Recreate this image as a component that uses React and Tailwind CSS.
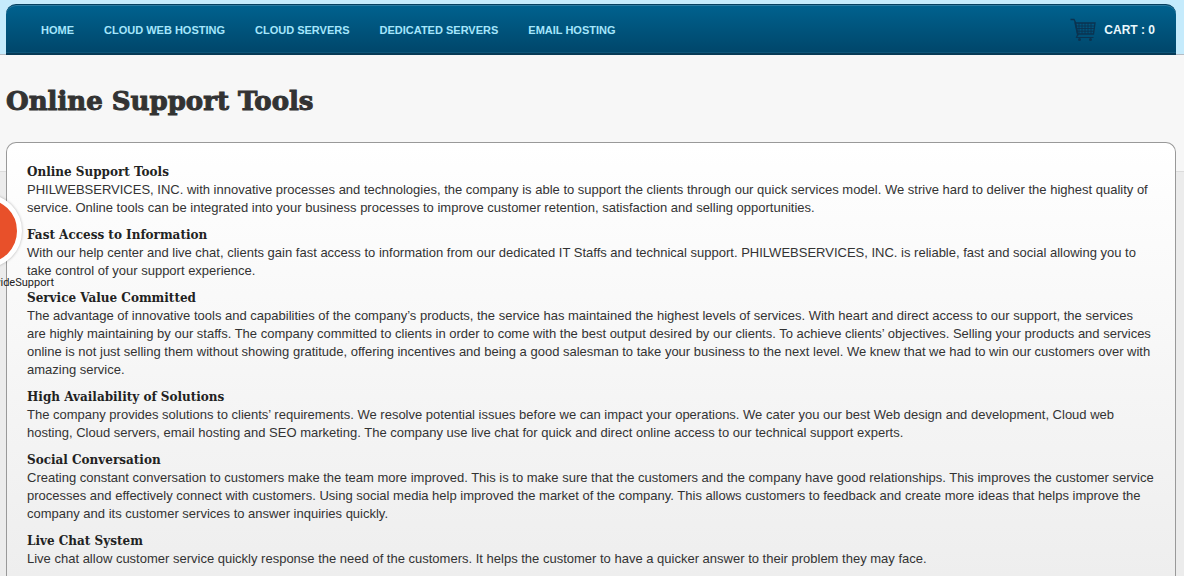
const navItems = [
  'Home',
  'Cloud Web Hosting',
  'Cloud Servers',
  'Dedicated Servers',
  'Email Hosting',
];

const sections = [
  {
    title: 'Online Support Tools',
    text: 'PHILWEBSERVICES, INC. with innovative processes and technologies, the company is able to support the clients through our quick services model. We strive hard to deliver the highest quality of service. Online tools can be integrated into your business processes to improve customer retention, satisfaction and selling opportunities.',
  },
  {
    title: 'Fast Access to Information',
    text: 'With our help center and live chat, clients gain fast access to information from our dedicated IT Staffs and technical support. PHILWEBSERVICES, INC. is reliable, fast and social allowing you to take control of your support experience.',
  },
  {
    title: 'Service Value Committed',
    text: 'The advantage of innovative tools and capabilities of the company’s products, the service has maintained the highest levels of services. With heart and direct access to our support, the services are\u00a0highly maintaining by our staffs. The company committed to clients in order to come with the best output desired by our clients. To achieve clients’ objectives. Selling your products and services online is not just selling them without showing gratitude, offering incentives and being a good salesman to take your business to the next level. We knew that we had to win our customers over with amazing service.',
  },
  {
    title: 'High Availability of Solutions',
    text: 'The company provides solutions to clients’ requirements. We resolve potential issues before we can impact your operations. We cater you our best Web design and development, Cloud web hosting, Cloud servers, email hosting and SEO marketing. The company use live chat for quick and direct online access to our technical support experts.',
  },
  {
    title: 'Social Conversation',
    text: 'Creating constant conversation to customers make the team more improved. This is to make sure that the customers and the company have good relationships. This improves the customer service processes and effectively connect with customers. Using social media help improved the market of the company. This allows customers to feedback and create more ideas that helps improve the company and its customer services to answer inquiries quickly.',
  },
  {
    title: 'Live Chat System',
    text: 'Live chat allow customer service quickly response the need of the customers. It helps the customer to have a quicker answer to their problem they may face.',
  },
];

function CartIcon() {
  return (
    <svg width="26" height="24" viewBox="0 0 26 24" fill="none" stroke="#0b3350" aria-hidden="true">
      <path d="M0.500 1.500h3.500l1.500 3L8 17.500" strokeWidth="1.400" />
      <path d="M5 5h20l-1.500 11H7.500z" strokeWidth="1.300" />
      <path d="M6 8h18.500M6.500 10.500h18M7 13.200h17" strokeWidth="0.900" />
      <path d="M9 5v11M12 5v11M15 5v11M18 5v11M21 5v11" strokeWidth="0.900" />
      <path d="M8 16l-1.500 3.500h17" strokeWidth="1.200" />
      <circle cx="9.500" cy="21.500" r="1.500" fill="#0b3350" stroke="none" />
      <circle cx="20.500" cy="21.500" r="1.500" fill="#0b3350" stroke="none" />
    </svg>
  );
}

function Header() {
  return (
    <div className="border-b border-[#b4bcc4] bg-[#c5ebfc] pt-1 pr-2 pl-1.5">
      <header className="-mb-px flex h-[51px] items-center justify-between rounded-t-[10px] border-t border-b-2 border-t-[#07405f] border-b-[#063a56] bg-linear-to-b from-[#00628f] to-[#00466a] pt-0.5 pr-[21px] pl-[35px] shadow-[inset_0_1px_0_#2c7ba1,inset_0_-1px_0_#0d5579]">
        <nav aria-label="Main">
          <ul className="flex gap-[30px]">
            {navItems.map((item) => (
              <li key={item}>
                <a href="#" className="block text-[11px] leading-4 font-bold text-[#a5e6fc] uppercase">
                  {item}
                </a>
              </li>
            ))}
          </ul>
        </nav>
        <a href="#" className="flex items-center gap-2 text-xs font-bold text-[#eaf8fd]">
          <CartIcon />
          CART : 0
        </a>
      </header>
    </div>
  );
}

function SupportWidget() {
  return (
    <a href="#" className="absolute top-[194px] left-[-52px] z-10 flex w-[106px] flex-col">
      <span className="block size-[74px] rounded-full border-[5px] border-white bg-[#e8502a] shadow-[0_0_3px_rgba(0,0,0,0.3)]" />
      <span className="mt-[7px] block text-right font-[Roboto,sans-serif] text-[11px] leading-4 text-[#222]">
        ProvideSupport
      </span>
    </a>
  );
}

export default function App() {
  return (
    <div className="relative min-h-screen overflow-hidden bg-[linear-gradient(to_bottom,#f7f7f7_171px,#dcdcdc_171px,#dcdcdc_172px,#ececec_172px)] font-['Liberation_Sans',Arial,sans-serif] text-[#333]">
      <Header />
      <SupportWidget />
      <main className="pr-2 pl-1.5">
        <h1 className="pt-7 pb-[23px] font-['DejaVu_Serif',serif] text-[26px] leading-9 font-bold [-webkit-text-stroke:1px_#333]">
          Online Support Tools
        </h1>
        <div className="flex flex-col gap-[9px] rounded-t-[10px] border border-b-0 border-[#999] bg-linear-to-b from-white to-[#eeeeee] px-5 pt-5 pb-2">
          {sections.map(({ title, text }) => (
            <section key={title}>
              <h2 className="font-['DejaVu_Serif',serif] text-xs leading-[18px] font-bold text-[#222]">{title}</h2>
              <p className="text-[13px] leading-[18px]">{text}</p>
            </section>
          ))}
        </div>
      </main>
    </div>
  );
}
